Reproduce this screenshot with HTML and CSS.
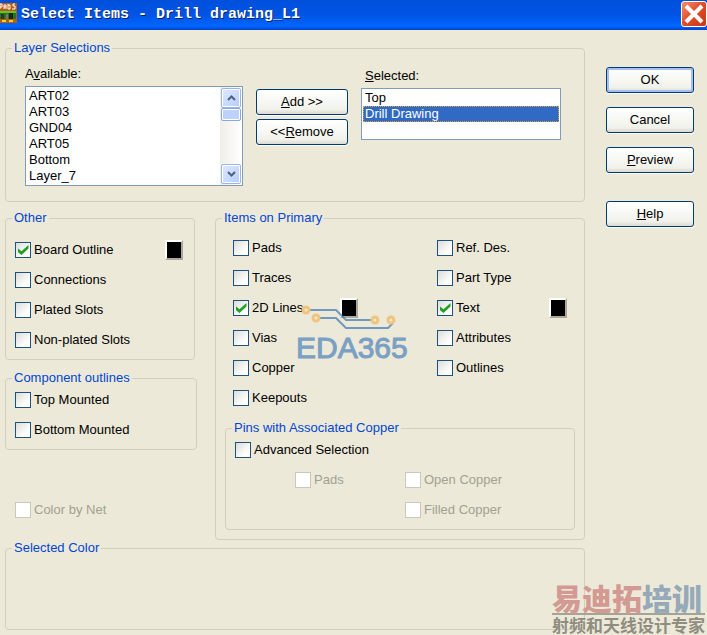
FILE: index.html
```html
<!DOCTYPE html>
<html lang="en">
<head>
    <meta charset="UTF-8">
    <meta name="viewport" content="width=device-width, initial-scale=1.0">
    <title>Select Items - Drill drawing_L1</title>
    <link rel="stylesheet" href="styles.css">
</head>
<body>
    <header class="titlebar">
        <svg class="app-icon" width="17" height="20" viewBox="0 0 17 20" aria-hidden="true">
            <rect width="17" height="20" fill="#b85c10"/>
            <path d="M0 1v5M0 1h2v3H0M4 6V2h2v4M4 4h2M8 1v5h2V2H8M15 1h-2v2h2v3h-3" fill="none" stroke="#fff"/>
            <rect y="8" width="16" height="8" fill="#1d7a12"/>
            <rect y="8" width="16" height="2" fill="#63c431"/>
            <rect x="1" y="11" width="3" height="5" fill="#333"/>
            <rect x="6" y="11" width="2" height="5" fill="#777"/>
            <rect x="9" y="10" width="4" height="6" fill="#222"/>
            <rect x="2" y="17" width="4" height="2" fill="#ffd21c"/>
            <rect x="9" y="17" width="4" height="2" fill="#ffd21c"/>
        </svg>
        <h1>Select Items - Drill drawing_L1</h1>
        <button type="button" class="close" aria-label="Close">
            <svg width="24" height="24" viewBox="0 0 24 24" aria-hidden="true">
                <path d="M4 4l16 16M20 4L4 20" stroke="#fff" stroke-width="4"/>
            </svg>
        </button>
    </header>

    <form class="dialog">
        <div class="main">
            <fieldset>
                <legend>Layer Selections</legend>
                <div class="layers">
                    <div class="available">
                        <label for="available">A<u>v</u>ailable:</label>
                        <div class="listbox">
                            <select id="available" size="6">
                                <option>ART02</option>
                                <option>ART03</option>
                                <option>GND04</option>
                                <option>ART05</option>
                                <option>Bottom</option>
                                <option>Layer_7</option>
                            </select>
                            <div class="scrollbar">
                                <button type="button" class="arrow" aria-label="Scroll up">
                                    <svg width="9" height="6" viewBox="0 0 9 6"><path d="M1 5l3.500-3.500L8 5"/></svg>
                                </button>
                                <div class="thumb"></div>
                                <button type="button" class="arrow arrow-down" aria-label="Scroll down">
                                    <svg width="9" height="6" viewBox="0 0 9 6"><path d="M1 1l3.500 3.500L8 1"/></svg>
                                </button>
                            </div>
                        </div>
                    </div>
                    <div class="transfer">
                        <button type="button" class="btn"><span><u>A</u>dd &gt;&gt;</span></button>
                        <button type="button" class="btn"><span>&lt;&lt;<u>R</u>emove</span></button>
                    </div>
                    <div class="selected">
                        <label for="selected"><u>S</u>elected:</label>
                        <div class="listbox">
                            <select id="selected" size="3">
                                <option>Top</option>
                                <option selected>Drill Drawing</option>
                            </select>
                        </div>
                    </div>
                </div>
            </fieldset>

            <div class="columns">
                <div class="side">
                    <fieldset class="other">
                        <legend>Other</legend>
                        <div class="checks">
                            <div class="row">
                                <label class="check"><input type="checkbox" checked>Board Outline</label>
                                <button type="button" class="swatch" aria-label="Board outline color"></button>
                            </div>
                            <label class="check"><input type="checkbox">Connections</label>
                            <label class="check"><input type="checkbox">Plated Slots</label>
                            <label class="check"><input type="checkbox">Non-plated Slots</label>
                        </div>
                    </fieldset>
                    <fieldset class="component">
                        <legend>Component outlines</legend>
                        <div class="checks">
                            <label class="check"><input type="checkbox">Top Mounted</label>
                            <label class="check"><input type="checkbox">Bottom Mounted</label>
                        </div>
                    </fieldset>
                    <label class="check by-net"><input type="checkbox" disabled>Color by Net</label>
                </div>

                <fieldset class="items">
                    <legend>Items on Primary</legend>
                    <div class="item-grid">
                        <div class="checks">
                            <label class="check"><input type="checkbox">Pads</label>
                            <label class="check"><input type="checkbox">Traces</label>
                            <div class="row">
                                <label class="check"><input type="checkbox" checked>2D Lines</label>
                                <button type="button" class="swatch" aria-label="2D lines color"></button>
                            </div>
                            <label class="check"><input type="checkbox">Vias</label>
                            <label class="check"><input type="checkbox">Copper</label>
                            <label class="check"><input type="checkbox">Keepouts</label>
                        </div>
                        <div class="checks">
                            <label class="check"><input type="checkbox">Ref. Des.</label>
                            <label class="check"><input type="checkbox">Part Type</label>
                            <div class="row">
                                <label class="check"><input type="checkbox" checked>Text</label>
                                <button type="button" class="swatch" aria-label="Text color"></button>
                            </div>
                            <label class="check"><input type="checkbox">Attributes</label>
                            <label class="check"><input type="checkbox">Outlines</label>
                        </div>
                    </div>
                    <fieldset class="pins">
                        <legend>Pins with Associated Copper</legend>
                        <div class="checks">
                            <label class="check"><input type="checkbox">Advanced Selection</label>
                            <div class="pin-grid">
                                <label class="check"><input type="checkbox" disabled>Pads</label>
                                <div class="checks">
                                    <label class="check"><input type="checkbox" disabled>Open Copper</label>
                                    <label class="check"><input type="checkbox" disabled>Filled Copper</label>
                                </div>
                            </div>
                        </div>
                    </fieldset>
                    <div class="eda-mark">
                        <svg width="112" height="30" viewBox="0 0 112 30" aria-hidden="true">
                            <g fill="none" stroke="#2e6fb0" stroke-opacity=".65" stroke-width="2">
                                <path d="M14 9h26l10 10h26"/>
                                <path d="M24 17h16l10 10h42l5-5"/>
                            </g>
                            <g fill="#ece9d8" stroke="#f0c47c" stroke-width="3">
                                <circle cx="10" cy="9" r="3"/>
                                <circle cx="20" cy="17" r="3"/>
                                <circle cx="79" cy="19" r="3"/>
                                <circle cx="95" cy="19" r="3"/>
                            </g>
                        </svg>
                        <span>EDA365</span>
                    </div>
                </fieldset>
            </div>

            <fieldset class="color">
                <legend>Selected Color</legend>
            </fieldset>
        </div>

        <div class="actions">
            <button type="submit" class="btn btn-default">OK</button>
            <button type="button" class="btn">Cancel</button>
            <button type="button" class="btn"><span><u>P</u>review</span></button>
            <button type="button" class="btn btn-help"><span><u>H</u>elp</span></button>
        </div>
    </form>

    <div class="corner-mark" lang="zh">
        <div class="brand"><span>易迪拓</span>培训</div>
        <div class="slogan">射频和天线设计专家</div>
    </div>
</body>
</html>
```
FILE: styles.css
```css
* {
    box-sizing: border-box;
}

body {
    margin: 0;
    min-height: 100vh;
    position: relative;
    background-color: #ece9d8;
    font-family: "Liberation Sans", Arial, sans-serif;
    font-size: 13px;
    line-height: 16px;
    color: #000;
    overflow: hidden;
}

.titlebar {
    display: flex;
    align-items: center;
    height: 30px;
    background: linear-gradient(#0050dc, #0054e4 50%, #0066ff 88%, #0040c8);
}

.app-icon {
    margin-bottom: 4px;
}

h1 {
    flex: 1;
    margin: 0 0 0 4px;
    font-family: "Liberation Mono", "Courier New", monospace;
    font-size: 15px;
    font-weight: bold;
    color: #fff;
    text-shadow: 1px 1px 0 #0a246a;
}

.close {
    display: flex;
    align-items: center;
    justify-content: center;
    width: 26px;
    height: 26px;
    margin-bottom: 2px;
    padding: 0;
    border: 1px solid #fff;
    border-radius: 3px;
    background: linear-gradient(135deg, #f0906c, #e0492a 50%, #c8380c);
}

.dialog {
    display: flex;
    gap: 21px;
    padding: 0 13px 0 5px;
}

.main {
    flex: 1;
    min-width: 0;
    padding-top: 10px;
}

fieldset {
    min-width: 0;
    margin: 0;
    padding: 0 6px;
    border: 1px solid #d0d0bf;
    border-radius: 4px;
}

legend {
    padding: 0 2px;
    color: #0046d5;
}

/* layer lists */
.layers {
    display: grid;
    grid-template-columns: 218fr 92px 200fr;
    column-gap: 13px;
    padding: 10px 17px 15px 13px;
}

.available label,
.selected label {
    display: block;
    margin-bottom: 4px;
}

.selected {
    padding-top: 2px;
}

.selected label {
    padding-left: 4px;
}

.listbox {
    display: flex;
    border: 1px solid #7f9db9;
    background-color: #fff;
}

select {
    flex: 1;
    min-width: 0;
    margin: 0;
    padding: 1px;
    border: none;
    outline: none;
    background-color: #fff;
    font: inherit;
    color: #000;
    overflow: hidden;
}

option {
    height: 16px;
    min-height: 16px;
    padding: 0 2px;
    line-height: 16px;
}

option:checked {
    background: linear-gradient(#316ac5, #316ac5);
    -webkit-text-fill-color: #fff;
    outline: 1px dotted #e8a030;
    outline-offset: -1px;
}

.scrollbar {
    display: flex;
    flex-direction: column;
    width: 22px;
    padding: 1px;
    background: linear-gradient(to right, #f0eee8, #fff);
}

.arrow {
    display: flex;
    align-items: center;
    justify-content: center;
    height: 20px;
    padding: 0;
    border: 1px solid #9cb4e4;
    border-radius: 2px;
    background: linear-gradient(135deg, #e0eafe, #b4ccfb);
    box-shadow: inset 0 0 0 1px #fff;
}

.arrow path {
    fill: none;
    stroke: #4d6185;
    stroke-width: 2;
}

.arrow-down {
    margin-top: auto;
}

.thumb {
    height: 13px;
    border: 1px solid #8aa8e0;
    border-radius: 2px;
    background-color: #bdd2fd;
    box-shadow: inset 0 0 0 1px #fff;
}

.transfer {
    display: flex;
    flex-direction: column;
    gap: 4px;
    padding-top: 23px;
}

/* push buttons */
.btn {
    height: 26px;
    padding: 0;
    border: 1px solid #003c74;
    border-radius: 3px;
    background: linear-gradient(#fff, #f2f2ec 80%, #dcdad0);
    box-shadow: 0 1px 1px #fff;
    font: inherit;
    color: #000;
}

.btn-default {
    box-shadow: inset 0 0 0 2px #a5bff0, 0 1px 1px #fff;
}

.actions {
    display: flex;
    flex-direction: column;
    gap: 14px;
    width: 88px;
    padding-top: 37px;
}

.btn-help {
    margin-top: 14px;
}

/* check boxes */
.columns {
    display: grid;
    grid-template-columns: 192px 1fr;
    column-gap: 18px;
    margin-top: 8px;
}

.checks {
    display: flex;
    flex-direction: column;
    align-items: flex-start;
    gap: 14px;
}

.row {
    display: flex;
    align-items: center;
    justify-content: space-between;
    width: 100%;
    height: 16px;
}

.check {
    display: flex;
    align-items: center;
    gap: 3px;
    height: 16px;
    white-space: nowrap;
}

.check input {
    appearance: none;
    width: 16px;
    height: 16px;
    margin: 0;
    border: 1px solid #1c5180;
    background: linear-gradient(135deg, #dcdcd7, #fff 75%);
}

.check input:checked {
    display: grid;
    place-items: center;
}

.check input:checked::before {
    content: "";
    width: 11px;
    height: 10px;
    background-color: #21a121;
    clip-path: polygon(0 30%, 36% 62%, 100% 0, 100% 36%, 36% 100%, 0 68%);
}

.check input:disabled {
    border-color: #cac8bb;
    background: #fff;
}

.check:has(input:disabled) {
    color: #a1a192;
}

.swatch {
    width: 18px;
    height: 20px;
    padding: 0;
    border: 2px solid #fff;
    border-right-color: #aca899;
    border-bottom-color: #aca899;
    background-color: #000;
}

.other {
    margin-right: 2px;
}

.other .checks {
    padding: 16px 5px 11px 3px;
}

.component {
    margin-top: 10px;
}

.component .checks,
.pins > .checks {
    padding: 6px 3px 11px;
}

.by-net {
    margin: 52px 0 0 10px;
}

.items {
    position: relative;
}

.item-grid {
    display: grid;
    grid-template-columns: 125px 1fr;
    column-gap: 79px;
    padding: 14px 11px;
}

.pins {
    margin: 0 3px 9px;
}

.pin-grid {
    display: grid;
    grid-template-columns: 110px 1fr;
    padding-left: 60px;
}

.color {
    height: 90px;
}

/* watermarks over the dialog */
.eda-mark {
    position: absolute;
    top: 75px;
    left: 80px;
    pointer-events: none;
}

.eda-mark svg {
    display: block;
}

.eda-mark span {
    display: block;
    font-size: 30px;
    line-height: 34px;
    color: #7aa0c4;
    -webkit-text-stroke: 1px #7aa0c4;
}

.corner-mark {
    position: absolute;
    right: 2px;
    bottom: 0;
    font-family: "Noto Sans CJK SC", sans-serif;
    text-align: left;
    white-space: nowrap;
    pointer-events: none;
}

.brand {
    border-bottom: 2px solid #a5a296;
    font-size: 30px;
    font-weight: 900;
    line-height: 32px;
    color: #96a9b9;
}

.brand span {
    color: #d29a92;
}

.slogan {
    font-size: 17px;
    font-weight: bold;
    line-height: 20px;
    color: #8f8d80;
}
```
